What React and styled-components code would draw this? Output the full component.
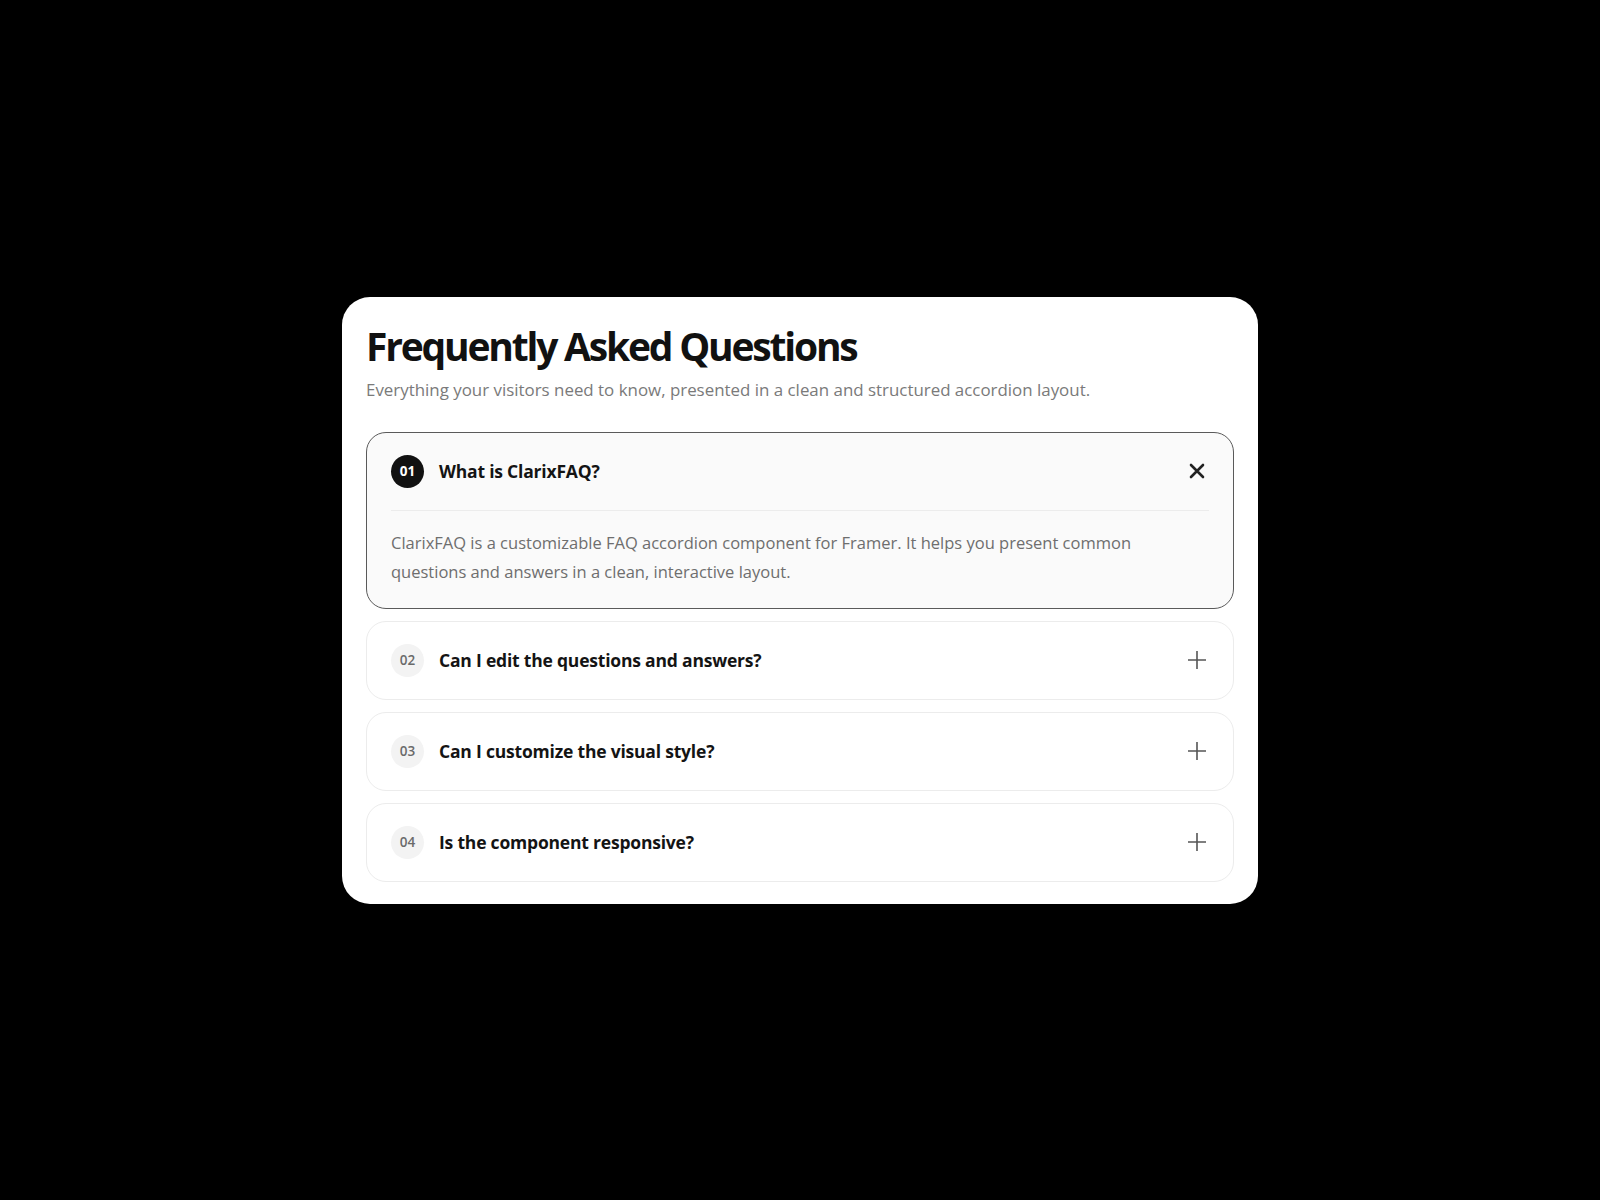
import styled, { createGlobalStyle } from 'styled-components'

const GlobalStyle = createGlobalStyle`
  html, body {
    margin: 0;
    padding: 0;
    background: #000;
  }
  body {
    font-family: "Segoe UI", "Open Sans", "Noto Sans", sans-serif;
    -webkit-font-smoothing: antialiased;
  }
`

const Page = styled.div`
  min-height: 100vh;
  display: flex;
  align-items: center;
  justify-content: center;
`

const Card = styled.section`
  width: 916px;
  box-sizing: border-box;
  background: #fff;
  border-radius: 28px;
  padding: 24px 24px 22px;
  display: flex;
  flex-direction: column;
`

const Title = styled.h1`
  margin: 0;
  font-size: 39px;
  line-height: 50px;
  font-weight: 700;
  letter-spacing: -2.2px;
  color: #111;
`

const Subtitle = styled.p`
  margin: 7px 0 30px;
  font-size: 16.9px;
  line-height: 24px;
  color: #7a7a7a;
`

const List = styled.div`
  display: flex;
  flex-direction: column;
  gap: 12px;
`

const Item = styled.div`
  border-radius: 20px;
  border: 1px solid ${p => (p.$open ? '#5a5a5a' : '#ececec')};
  background: ${p => (p.$open ? '#fafafa' : '#fff')};
  padding: 0 24px;
`

const Header = styled.div`
  display: flex;
  align-items: center;
  gap: 15px;
  padding: 22px 0;
  border-bottom: ${p => (p.$open ? '1px solid #ececec' : 'none')};
`

const Badge = styled.span`
  width: 33px;
  height: 33px;
  flex: none;
  border-radius: 50%;
  display: flex;
  align-items: center;
  justify-content: center;
  font-size: 13.5px;
  font-weight: ${p => (p.$open ? 700 : 600)};
  background: ${p => (p.$open ? '#111' : '#f3f3f3')};
  color: ${p => (p.$open ? '#fff' : '#6a6a6a')};
`

const Question = styled.span`
  flex: 1;
  font-size: 17.5px;
  font-weight: 700;
  letter-spacing: -0.2px;
  color: #141414;
`

const Toggle = styled.span`
  width: 24px;
  height: 24px;
  flex: none;
  display: flex;
  align-items: center;
  justify-content: center;
  color: ${p => (p.$open ? '#222' : '#555')};
`

const Answer = styled.p`
  margin: 0;
  padding: 17px 0 22px;
  max-width: 780px;
  font-size: 16.5px;
  line-height: 29px;
  color: #6e6e6e;
`

const CloseIcon = () => (
  <svg width="16" height="16" viewBox="0 0 16 16" fill="none">
    <path d="M2 2L14 14M14 2L2 14" stroke="currentColor" strokeWidth="2.6" strokeLinecap="round" />
  </svg>
)

const PlusIcon = () => (
  <svg width="20" height="20" viewBox="0 0 20 20" fill="none">
    <path d="M10 1V19M1 10H19" stroke="currentColor" strokeWidth="1.6" />
  </svg>
)

const faqs = [
  {
    q: 'What is ClarixFAQ?',
    a: 'ClarixFAQ is a customizable FAQ accordion component for Framer. It helps you present common questions and answers in a clean, interactive layout.',
  },
  { q: 'Can I edit the questions and answers?' },
  { q: 'Can I customize the visual style?' },
  { q: 'Is the component responsive?' },
]

const App = () => {
  const openIndex = 0
  return (
    <Page>
      <GlobalStyle />
      <Card>
        <Title>Frequently Asked Questions</Title>
        <Subtitle>
          Everything your visitors need to know, presented in a clean and structured accordion layout.
        </Subtitle>
        <List>
          {faqs.map((f, i) => {
            const open = i === openIndex
            return (
              <Item key={f.q} $open={open}>
                <Header $open={open}>
                  <Badge $open={open}>{String(i + 1).padStart(2, '0')}</Badge>
                  <Question>{f.q}</Question>
                  <Toggle $open={open}>{open ? <CloseIcon /> : <PlusIcon />}</Toggle>
                </Header>
                {open && <Answer>{f.a}</Answer>}
              </Item>
            )
          })}
        </List>
      </Card>
    </Page>
  )
}

export default App
